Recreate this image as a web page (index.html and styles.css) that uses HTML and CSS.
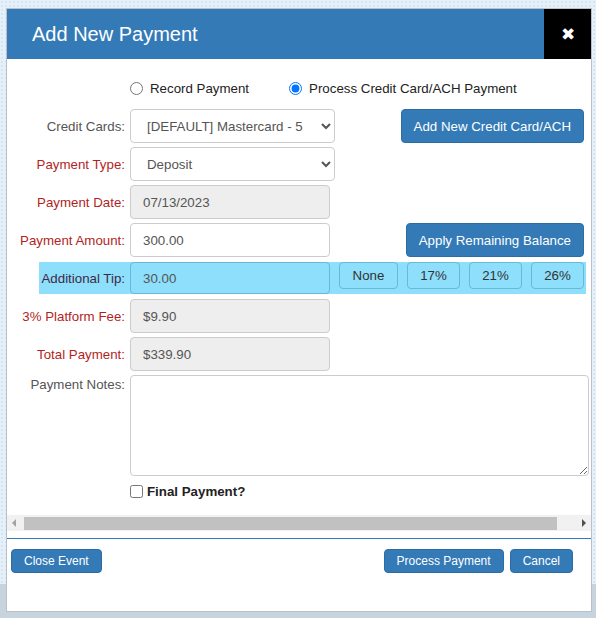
FILE: index.html
```html
<!DOCTYPE html>
<html lang="en">

<head>
  <meta charset="UTF-8">
  <meta name="viewport" content="width=device-width, initial-scale=1.0">
  <title>Add New Payment</title>

  <link rel="stylesheet" href="styles.css">
</head>

<body>
  <div class="modal">
    <div class="modal-header">
      <h2>Add New Payment</h2>
      <button class="close-btn">&#x2716;</button>
    </div>

    <div class="modal-body">
      <div class="body-inner">
        <div class="mode-row">
          <label class="radio"><input type="radio" name="mode"> Record Payment</label>
          <label class="radio"><input type="radio" name="mode" checked> Process Credit Card/ACH Payment</label>
        </div>

        <div class="form-row">
          <label class="field-label">Credit Cards:</label>
          <select class="field field-select">
            <option>[DEFAULT] Mastercard - 5</option>
          </select>
          <button class="btn btn-primary btn-side">Add New Credit Card/ACH</button>
        </div>

        <div class="form-row">
          <label class="field-label required">Payment Type:</label>
          <select class="field field-select">
            <option>Deposit</option>
          </select>
        </div>

        <div class="form-row">
          <label class="field-label required">Payment Date:</label>
          <input class="field" value="07/13/2023" readonly>
        </div>

        <div class="form-row">
          <label class="field-label required">Payment Amount:</label>
          <input class="field field-white" value="300.00">
          <button class="btn btn-primary btn-side">Apply Remaining Balance</button>
        </div>

        <div class="form-row tip-row">
          <label class="field-label tip-label">Additional Tip:</label>
          <input class="field tip-input" value="30.00">
          <button class="btn btn-tip tip-none">None</button>
          <button class="btn btn-tip">17%</button>
          <button class="btn btn-tip">21%</button>
          <button class="btn btn-tip">26%</button>
        </div>

        <div class="form-row">
          <label class="field-label required">3% Platform Fee:</label>
          <input class="field" value="$9.90" readonly>
        </div>

        <div class="form-row">
          <label class="field-label required">Total Payment:</label>
          <input class="field" value="$339.90" readonly>
        </div>

        <div class="form-row notes-row">
          <label class="field-label">Payment Notes:</label>
          <textarea class="notes"></textarea>
        </div>

        <div class="final-row">
          <label class="check"><input type="checkbox"> Final Payment?</label>
        </div>
      </div>
    </div>

    <!-- horizontal scroller for the wide body -->
    <div class="hscroll">
      <span class="hscroll-arrow arrow-left"></span>
      <span class="hscroll-track"><span class="hscroll-thumb"></span></span>
      <span class="hscroll-arrow arrow-right"></span>
    </div>

    <div class="modal-footer">
      <button class="btn btn-primary btn-sm">Close Event</button>
      <div class="footer-right">
        <button class="btn btn-primary btn-sm">Process Payment</button>
        <button class="btn btn-primary btn-sm">Cancel</button>
      </div>
    </div>
  </div>
</body>

</html>
```

FILE: styles.css
```css
html,
body {
  height: 100%;
}

body {
  background-color: #e6f0f9;
  background-image:
    linear-gradient(to bottom, transparent 584px, #c8d4dd 584px),
    radial-gradient(circle, #d6e5f2 1px, transparent 1px);
  background-size: 100% 100%, 4px 4px;
  font-family: "Liberation Sans", Arial, sans-serif;
  font-size: 13.3px;
  margin: 0;
  overflow: hidden;
}

.modal {
  background: #fff;
  border: 1px solid #b8c0c8;
  box-sizing: border-box;
  display: flex;
  flex-direction: column;
  height: 604px;
  margin: 8px 0 0 6px;
  width: 586px;
}

.modal-header {
  align-items: center;
  background: #337ab7;
  display: flex;
  flex-shrink: 0;
  height: 50px;
  justify-content: space-between;
}

.modal-header h2 {
  color: #fff;
  font-size: 20px;
  font-weight: normal;
  margin: 0 0 0 25px;
}

.close-btn {
  background: #000;
  border: 0;
  color: #fff;
  font-size: 17px;
  height: 50px;
  padding: 0;
  width: 47px;
}

.modal-body {
  flex-shrink: 0;
  height: 456px;
  overflow: hidden;
}

.body-inner {
  width: 601px;
}

.mode-row {
  align-items: center;
  display: flex;
  gap: 40px;
  height: 20px;
  margin-top: 19px;
  padding-left: 123px;
}

.radio,
.check {
  align-items: center;
  color: #222;
  display: flex;
  white-space: nowrap;
}

.radio input,
.check input {
  height: 13px;
  margin: 0 7px 0 0;
  width: 13px;
}

.check {
  font-weight: bold;
}

.check input {
  margin-right: 4px;
}

.form-row {
  align-items: center;
  display: flex;
  height: 34px;
  margin-top: 4px;
  padding-right: 24px;
}

.mode-row + .form-row {
  margin-top: 11px;
}

.field-label {
  color: #555;
  flex-shrink: 0;
  margin-right: 5px;
  text-align: right;
  white-space: nowrap;
  width: 118px;
}

.field-label.required {
  color: #b21f24;
}

.field {
  background: #eee;
  border: 1px solid #ccc;
  border-radius: 4px;
  box-sizing: border-box;
  color: #555;
  flex-shrink: 0;
  font-family: inherit;
  font-size: 13.3px;
  height: 34px;
  padding: 0 12px;
  width: 200px;
}

.field-white,
.field-select {
  background: #fff;
}

.field-select {
  padding: 0 8px 0 12px;
  width: 205px;
}

.btn {
  border-radius: 4px;
  cursor: pointer;
  font-family: inherit;
  font-size: 13.3px;
  white-space: nowrap;
}

.btn-primary {
  background: #337ab7;
  border: 1px solid #2e6da4;
  color: #fff;
}

.btn-side {
  height: 34px;
  margin-left: auto;
  padding: 0 12px;
}

.tip-row {
  align-items: flex-start;
  background: #8ddffb;
  height: 32px;
  margin: 5px 22px 5px 32px;
  padding-right: 0;
}

.tip-label {
  align-self: center;
  color: #3f2a45;
  width: 86px;
}

.tip-input {
  background: #8ddffb;
  border-color: #6ab8d4;
  height: 32px;
}

.btn-tip {
  background: #8ddffb;
  border: 1px solid #6ab8d4;
  color: #333;
  flex-shrink: 0;
  height: 27px;
  margin-left: 9px;
  padding: 0;
  width: 53px;
}

.btn-tip.tip-none {
  width: 59px;
}

.tip-row + .form-row {
  margin-top: 0;
}

.notes-row {
  align-items: flex-start;
  height: auto;
  padding-right: 0;
}

.notes-row .field-label {
  padding-top: 2px;
}

.notes {
  border: 1px solid #ccc;
  border-radius: 4px;
  box-sizing: border-box;
  flex-shrink: 0;
  height: 101px;
  width: 459px;
}

.final-row {
  margin-top: 8px;
  padding-left: 123px;
}

.hscroll {
  align-items: center;
  background: #f1f1f1;
  display: flex;
  flex-shrink: 0;
  height: 16px;
}

.hscroll-arrow {
  flex-shrink: 0;
  height: 0;
  width: 0;
}

.arrow-left {
  border-bottom: 4px solid transparent;
  border-right: 4px solid #a3a3a3;
  border-top: 4px solid transparent;
  margin: 0 8px 0 5px;
}

.arrow-right {
  border-bottom: 4px solid transparent;
  border-left: 4px solid #505050;
  border-top: 4px solid transparent;
  margin: 0 5px 0 13px;
}

.hscroll-track {
  display: flex;
  flex: 1;
}

.hscroll-thumb {
  background: #c1c1c1;
  height: 13px;
  width: 533px;
}

.modal-footer {
  align-items: flex-start;
  border-top: 1px solid #337ab7;
  display: flex;
  flex: 1;
  justify-content: space-between;
  margin-top: 7px;
  padding: 10px 18px 0 4px;
}

.footer-right {
  display: flex;
  gap: 6px;
}

.btn-sm {
  font-size: 12px;
  height: 24px;
  padding: 0 12px;
}
```
